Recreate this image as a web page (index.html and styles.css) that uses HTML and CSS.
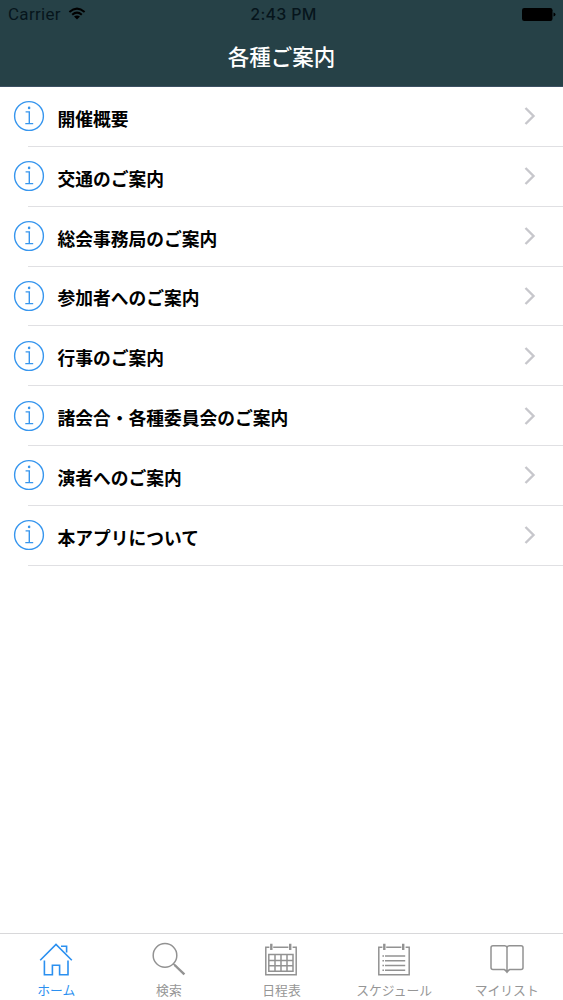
FILE: index.html
```html
<!DOCTYPE html>
<html lang="ja">
  <head>
    <meta charset="UTF-8">
    <meta name="viewport" content="width=device-width, initial-scale=1">
    <title>各種ご案内</title>
    <link rel="stylesheet" href="styles.css">
  </head>
  <body>
    <!-- 共通アイコン -->
    <svg class="icon-defs">
      <symbol id="icon-info" viewBox="0 0 32 32">
        <circle cx="16" cy="16" r="14.4" />
        <path d="M12.6 11.9H16.3V23.4M12.3 23.6H20.2" />
        <circle class="dot" cx="16.1" cy="7.9" r="1.3" />
      </symbol>
      <symbol id="icon-arrow" viewBox="0 0 12 20">
        <path d="M1.5 2L9.5 10L1.5 18" />
      </symbol>
    </svg>

    <header class="header">
      <div class="status-bar">
        <div class="carrier">
          <span>Carrier</span>
          <svg class="wifi" viewBox="0 0 18 13">
            <path d="M1.4 4.9Q9 -1.7 16.6 4.9M4.2 7.7Q9 3.5 13.8 7.7" />
            <path class="fill" d="M6 9.6Q9 7.2 12 9.6L9 12.6Z" />
          </svg>
        </div>
        <div class="time">2:43 PM</div>
        <svg class="battery" viewBox="0 0 34 13">
          <rect x="0" y="0" width="30.5" height="13" rx="2.2" />
          <path d="M31.5 4.5Q33.5 5 33.5 6.5T31.5 8.5Z" />
        </svg>
      </div>
      <h1 class="title">各種ご案内</h1>
    </header>

    <ul class="menu">
      <li class="menu-item"><svg class="info"><use href="#icon-info" /></svg><span class="name">開催概要</span><svg class="arrow"><use href="#icon-arrow" /></svg></li>
      <li class="menu-item"><svg class="info"><use href="#icon-info" /></svg><span class="name">交通のご案内</span><svg class="arrow"><use href="#icon-arrow" /></svg></li>
      <li class="menu-item"><svg class="info"><use href="#icon-info" /></svg><span class="name">総会事務局のご案内</span><svg class="arrow"><use href="#icon-arrow" /></svg></li>
      <li class="menu-item"><svg class="info"><use href="#icon-info" /></svg><span class="name">参加者へのご案内</span><svg class="arrow"><use href="#icon-arrow" /></svg></li>
      <li class="menu-item"><svg class="info"><use href="#icon-info" /></svg><span class="name">行事のご案内</span><svg class="arrow"><use href="#icon-arrow" /></svg></li>
      <li class="menu-item"><svg class="info"><use href="#icon-info" /></svg><span class="name">諸会合・各種委員会のご案内</span><svg class="arrow"><use href="#icon-arrow" /></svg></li>
      <li class="menu-item"><svg class="info"><use href="#icon-info" /></svg><span class="name">演者へのご案内</span><svg class="arrow"><use href="#icon-arrow" /></svg></li>
      <li class="menu-item"><svg class="info"><use href="#icon-info" /></svg><span class="name">本アプリについて</span><svg class="arrow"><use href="#icon-arrow" /></svg></li>
    </ul>

    <!-- タブバー -->
    <nav class="tab-bar">
      <div class="tab active">
        <svg viewBox="0 0 36 36">
          <path d="M2.2 18.2L18 2.4L33.8 18.2M23 4.2H28.6V10.4M6.4 18.4V32.8H14.4V23.2H21.6V32.8H30V18.4" />
        </svg>
        <span>ホーム</span>
      </div>
      <div class="tab">
        <svg viewBox="0 0 36 36">
          <circle cx="14" cy="13.4" r="11.8" />
          <path d="M22.4 21.8L25 24.4" />
          <path class="thick" d="M23.6 23L33.4 32.4" />
        </svg>
        <span>検索</span>
      </div>
      <div class="tab">
        <svg viewBox="0 0 36 36">
          <path d="M6.4 5.2H2.8V32.8H33.2V5.2H29.6M10.2 5.2H25.4" />
          <path class="thick" d="M8.3 1.8V8M27.2 1.8V8" />
          <path d="M5.8 12.4H30V29.2H5.8ZM5.8 18.4H30M5.8 23.8H30M12 12.4V29.2M18 12.4V29.2M24 12.4V29.2" />
        </svg>
        <span>日程表</span>
      </div>
      <div class="tab">
        <svg viewBox="0 0 36 36">
          <path d="M6.4 5.2H2.8V32.8H33.2V5.2H29.6M10.2 5.2H25.4" />
          <path class="thick" d="M8.3 1.8V8M27.2 1.8V8" />
          <path d="M6.4 14H8M9 14H29.2M6.4 18.8H8M9 18.8H29.2M6.4 23.6H8M9 23.6H29.2M6.4 28.2H8M9 28.2H29.2" />
        </svg>
        <span>スケジュール</span>
      </div>
      <div class="tab">
        <svg viewBox="0 0 36 36">
          <path d="M18 5.6Q17.4 3.8 15.6 3.8H4Q2 3.8 2 5.8V25.6Q2 27.6 4 27.6H15.4L18 29.4L20.6 27.6H32Q34 27.6 34 25.6V5.8Q34 3.8 32 3.8H20.4Q18.6 3.8 18 5.6V29.4" />
          <path class="fill" d="M15.4 28H20.6L18 31.4Z" />
        </svg>
        <span>マイリスト</span>
      </div>
    </nav>
  </body>
</html>
```
FILE: styles.css
```css
* {
  box-sizing: border-box;
}

body {
  margin: 0;
  height: 100vh;
  display: flex;
  flex-direction: column;
  background: #fff;
  color: #000;
  font-family: "Noto Sans CJK JP", sans-serif;
}

svg {
  fill: none;
}

.icon-defs {
  display: none;
}

/* ヘッダー */
.header {
  height: 87px;
  flex: none;
  background: #264147;
  border-bottom: 1px solid #3c5062;
}

.status-bar {
  display: grid;
  grid-template-columns: 1fr auto 1fr;
  align-items: center;
  height: 28px;
  padding: 0 7px 0 8px;
  font-family: Roboto, sans-serif;
  font-size: 17px;
  color: #06151c;
}

.carrier {
  display: flex;
  align-items: center;
  gap: 7px;
  letter-spacing: 0.3px;
}

.wifi {
  width: 18px;
  height: 13px;
  margin-top: -2px;
  stroke: #000;
  stroke-width: 2;
}

.wifi .fill {
  fill: #000;
  stroke: none;
}

.time {
  padding-left: 3px;
  font-family: Inter, sans-serif;
  font-size: 16px;
  font-weight: 500;
  letter-spacing: 0.3px;
}

.battery {
  width: 34px;
  height: 13px;
  fill: #000;
  justify-self: end;
}

.title {
  margin: 0;
  color: #fff;
  font-size: 21.5px;
  font-weight: 500;
  line-height: 56px;
  text-align: center;
}

/* メニュー一覧 */
.menu {
  flex: 1;
  margin: 0;
  padding: 0;
  list-style: none;
}

.menu-item {
  display: flex;
  align-items: center;
  height: 59.85px;
  margin-left: 28px;
  padding-right: 27px;
  border-bottom: 1px solid #e0e0e3;
}

.info {
  flex: none;
  width: 32px;
  height: 32px;
  margin-left: -15.5px;
  stroke: #3796ee;
  stroke-width: 1.4;
}

.dot {
  fill: #3796ee;
  stroke: none;
}

.name {
  flex: 1;
  padding-top: 3px;
  margin-left: 13px;
  font-size: 17.75px;
  font-weight: 700;
  line-height: 26px;
}

.arrow {
  width: 12px;
  height: 20px;
  stroke: #c7c7cc;
  stroke-width: 2.4;
}

/* タブバー */
.tab-bar {
  flex: none;
  display: grid;
  grid-template-columns: repeat(5, 1fr);
  height: 67px;
  border-top: 1px solid #d8d8da;
}

.tab {
  display: flex;
  flex-direction: column;
  align-items: center;
  padding-top: 8px;
  color: #969696;
  font-size: 12.8px;
  line-height: 20px;
  white-space: nowrap;
}

.tab svg {
  width: 36px;
  height: 36px;
  stroke: #929292;
  stroke-width: 1.5;
}

.tab .thick {
  stroke-width: 2.4;
}

.tab .fill {
  fill: #929292;
  stroke: none;
}

.tab span {
  margin-top: 2px;
}

.tab.active {
  color: #2b90f0;
}

.tab.active svg {
  stroke: #2b90f0;
  stroke-width: 1.6;
}
```
